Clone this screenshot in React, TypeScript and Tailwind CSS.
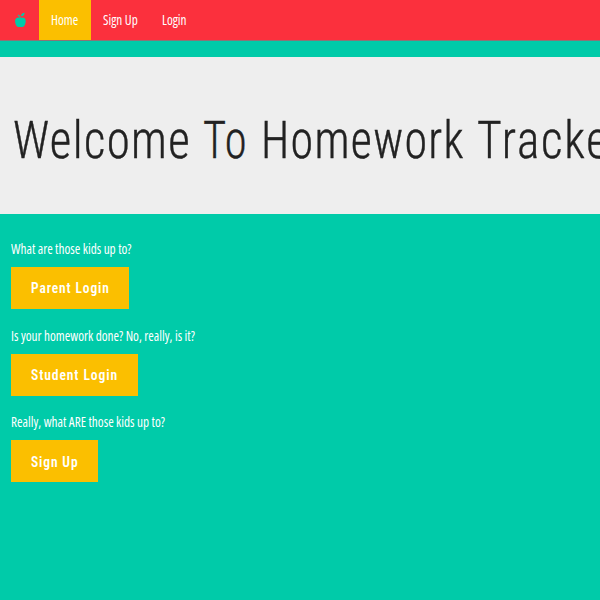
import React from "react";

function Apple() {
  return (
    <svg viewBox="0 0 12 16" className="block h-4 w-3" fill="#00cba9">
      <path d="M5.4 6.2C4.3 5.400 2.500 5.200 1.300 6.200C.1 7.200-.1 8.900.2 10.400C.6 12.800 1.900 14.900 3.700 15.100C4.400 15.200 4.700 14.900 5.400 14.900C6.100 14.900 6.400 15.200 7.100 15.100C8.900 14.900 10.200 12.800 10.600 10.400C10.900 8.900 10.700 7.200 9.500 6.200C8.300 5.200 6.500 5.400 5.400 6.200Z" />
      <path d="M6 4.100C6.100 2.100 7.200.9 9.600.7C9.500 2.900 8.300 4.200 6 4.100Z" />
      <path d="M5.400 6.200C5.200 4.700 4.600 3.700 2.900 3" fill="none" stroke="#00cba9" strokeWidth="1.1" />
    </svg>
  );
}

const condensed =
  "inline-block origin-left scale-x-[0.885] whitespace-nowrap font-['Open_Sans','Liberation_Sans',sans-serif] text-[15px] font-normal text-white [font-stretch:75%]";

const word = "inline-block origin-left whitespace-nowrap";

function Block({ text, label, width, scale }: { text: string; label: string; width: string; scale: string }) {
  return (
    <div className="mb-[14.67px]">
      <p className="flex h-[30px] items-start leading-[22px]">
        <span className={condensed}>{text}</span>
      </p>
      <button className={`flex h-[42px] items-center bg-[#fbbf00] pl-[19.5px] pt-[2px] ${width}`}>
        <span
          className={`inline-block origin-left whitespace-nowrap font-['Roboto',sans-serif] text-[15.5px] font-semibold tracking-[1px] text-white [font-stretch:85%] ${scale}`}
        >
          {label}
        </span>
      </button>
    </div>
  );
}

export default function App() {
  return (
    <div className="flex h-[600px] w-[600px] flex-col overflow-hidden bg-[#00cba9]">
      <nav className="flex h-[41px] shrink-0 items-stretch border-b border-[#8b7478] bg-[#fb303d]">
        <div className="flex w-[39px] items-center pl-[15px]">
          <Apple />
        </div>
        <a className="flex w-[52px] items-center bg-[#fbbf00] pb-px pl-3">
          <span className={condensed}>Home</span>
        </a>
        <a className="flex w-[60px] items-center pb-px pl-[11.5px]">
          <span className={condensed}>Sign Up</span>
        </a>
        <a className="flex items-center pb-px pl-[11px]">
          <span className={condensed}>Login</span>
        </a>
      </nav>
      <header className="mt-4 flex h-[157px] shrink-0 items-center overflow-hidden bg-[#eeeeee] pl-[13px] pt-[11px]">
        <h1 className="flex whitespace-nowrap font-['Roboto',sans-serif] text-[51px] font-[350] text-[#222] [-webkit-text-stroke:0.4px_#222] [font-stretch:75%]">
          <span className="w-[190px] shrink-0">
            <span className={`${word} scale-x-[0.92] tracking-[1.5px]`}>Welcome </span>
          </span>
          <span className="w-[58px] shrink-0">
            <span className={`${word} scale-x-[0.87] tracking-[1px]`}>To </span>
          </span>
          <span className="w-[216px] shrink-0">
            <span className={`${word} scale-x-[0.9] tracking-[1.5px]`}>Homework </span>
          </span>
          <span className={`${word} scale-x-[0.93] tracking-[1.9px]`}>Tracker</span>
        </h1>
      </header>
      <main className="pl-[11px] pt-[23px]">
        <Block text="What are those kids up to?" label="Parent Login" width="w-[118px]" scale="scale-x-[0.87]" />
        <Block text="Is your homework done? No, really, is it?" label="Student Login" width="w-[127px]" scale="scale-x-[0.88]" />
        <Block text="Really, what ARE those kids up to?" label="Sign Up" width="w-[87px]" scale="scale-x-[0.87]" />
      </main>
    </div>
  );
}
